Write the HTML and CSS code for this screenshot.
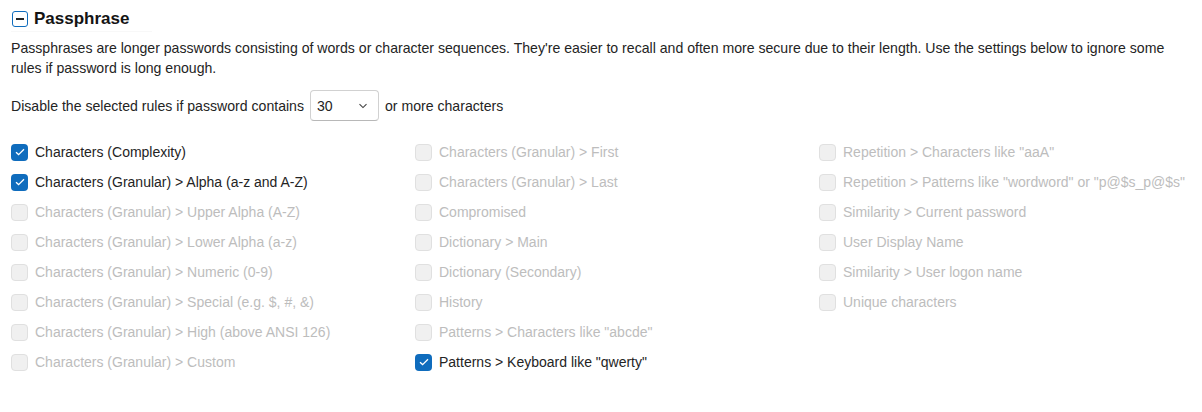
FILE: index.html
```html
<!DOCTYPE html>
<html>
<head>
<meta charset="utf-8">
<link rel="stylesheet" href="styles.css">
</head>
<body>
<div class="page">
  <div class="header">
    <span class="collapse-icon"><span class="minus"></span></span>
    <span class="title">Passphrase</span>
  </div>
  <p class="desc">Passphrases are longer passwords consisting of words or character sequences. They're easier to recall and often more secure due to their length. Use the settings below to ignore some rules if password is long enough.</p>
  <div class="threshold">
    <span>Disable the selected rules if password contains</span>
    <span class="select"><span class="select-value">30</span><svg class="chev" width="10" height="6" viewBox="0 0 10 6"><path d="M1.5 1.2 L5 4.6 L8.5 1.2" fill="none" stroke="#424242" stroke-width="1.1"/></svg></span>
    <span>or more characters</span>
  </div>
  <div class="grid">
    <div class="col">
      <div class="item checked"><span class="box"><svg width="12" height="10" viewBox="0 0 12 10"><path d="M2 5.2 L4.6 7.6 L10 2.2" fill="none" stroke="#fff" stroke-width="1.3"/></svg></span><span class="label">Characters (Complexity)</span></div>
      <div class="item checked"><span class="box"><svg width="12" height="10" viewBox="0 0 12 10"><path d="M2 5.2 L4.6 7.6 L10 2.2" fill="none" stroke="#fff" stroke-width="1.3"/></svg></span><span class="label">Characters (Granular) &gt; Alpha (a-z and A-Z)</span></div>
      <div class="item disabled"><span class="box"></span><span class="label">Characters (Granular) &gt; Upper Alpha (A-Z)</span></div>
      <div class="item disabled"><span class="box"></span><span class="label">Characters (Granular) &gt; Lower Alpha (a-z)</span></div>
      <div class="item disabled"><span class="box"></span><span class="label">Characters (Granular) &gt; Numeric (0-9)</span></div>
      <div class="item disabled"><span class="box"></span><span class="label">Characters (Granular) &gt; Special (e.g. $, #, &amp;)</span></div>
      <div class="item disabled"><span class="box"></span><span class="label">Characters (Granular) &gt; High (above ANSI 126)</span></div>
      <div class="item disabled"><span class="box"></span><span class="label">Characters (Granular) &gt; Custom</span></div>
    </div>
    <div class="col">
      <div class="item disabled"><span class="box"></span><span class="label">Characters (Granular) &gt; First</span></div>
      <div class="item disabled"><span class="box"></span><span class="label">Characters (Granular) &gt; Last</span></div>
      <div class="item disabled"><span class="box"></span><span class="label">Compromised</span></div>
      <div class="item disabled"><span class="box"></span><span class="label">Dictionary &gt; Main</span></div>
      <div class="item disabled"><span class="box"></span><span class="label">Dictionary (Secondary)</span></div>
      <div class="item disabled"><span class="box"></span><span class="label">History</span></div>
      <div class="item disabled"><span class="box"></span><span class="label">Patterns &gt; Characters like "abcde"</span></div>
      <div class="item checked"><span class="box"><svg width="12" height="10" viewBox="0 0 12 10"><path d="M2 5.2 L4.6 7.6 L10 2.2" fill="none" stroke="#fff" stroke-width="1.3"/></svg></span><span class="label">Patterns &gt; Keyboard like "qwerty"</span></div>
    </div>
    <div class="col">
      <div class="item disabled"><span class="box"></span><span class="label">Repetition &gt; Characters like "aaA"</span></div>
      <div class="item disabled"><span class="box"></span><span class="label">Repetition &gt; Patterns like "wordword" or "p@$s_p@$s"</span></div>
      <div class="item disabled"><span class="box"></span><span class="label">Similarity &gt; Current password</span></div>
      <div class="item disabled"><span class="box"></span><span class="label">User Display Name</span></div>
      <div class="item disabled"><span class="box"></span><span class="label">Similarity &gt; User logon name</span></div>
      <div class="item disabled"><span class="box"></span><span class="label">Unique characters</span></div>
    </div>
  </div>
</div>
</body>
</html>
```

FILE: styles.css
```css
html, body {
  margin: 0;
  padding: 0;
  background: #ffffff;
}
body {
  font-family: "Liberation Sans", Arial, sans-serif;
  font-size: 14px;
  color: #242424;
}
.page {
  padding: 9px 11px 0 11px;
}
.header {
  display: flex;
  align-items: center;
  gap: 6px;
  height: 20px;
  padding-left: 1px;
  padding-bottom: 2px;
  border-bottom: 1px solid #f8f8f8;
  width: 140px;
}
.collapse-icon {
  width: 16px;
  height: 16px;
  box-sizing: border-box;
  border: 1.7px solid #0f6cbd;
  border-radius: 3px;
  display: flex;
  align-items: center;
  justify-content: center;
}
.minus {
  width: 8px;
  height: 1.3px;
  background: #242424;
}
.title {
  font-weight: bold;
  font-size: 17px;
  color: #141414;
}
.desc {
  margin: 6px 0 0 0;
  max-width: 1172px;
  font-size: 14.1px;
  line-height: 20px;
  color: #242424;
}
.threshold {
  display: flex;
  align-items: center;
  gap: 6px;
  margin-top: 12px;
  font-size: 14.1px;
}
.select {
  display: flex;
  align-items: center;
  justify-content: space-between;
  width: 69px;
  height: 31px;
  box-sizing: border-box;
  border: 1px solid #d1d1d1;
  border-bottom-color: #b8b8b8;
  border-radius: 4px;
  padding: 0 10px 0 6px;
}
.select-value {
  color: #242424;
}
.grid {
  display: grid;
  grid-template-columns: 404px 404px 1fr;
  margin-top: 16px;
}
.col {
  display: flex;
  flex-direction: column;
}
.item {
  display: flex;
  align-items: center;
  gap: 7px;
  height: 30px;
}
.box {
  width: 17px;
  height: 17px;
  box-sizing: border-box;
  border-radius: 4px;
  display: flex;
  align-items: center;
  justify-content: center;
}
.checked .box {
  background: #0f6cbd;
}
.disabled .box {
  background: #f0f0f0;
  border: 1px solid #e0e0e0;
}
.checked .label {
  color: #242424;
}
.disabled .label {
  color: #bdbdbd;
}
```
